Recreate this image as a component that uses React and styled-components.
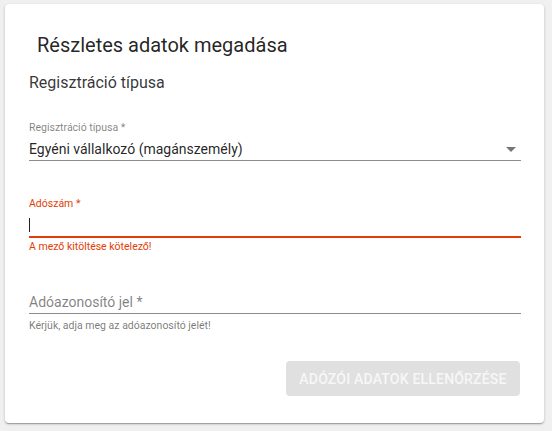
import styled, { createGlobalStyle } from 'styled-components';

const ERROR = '#e23d06';

const GlobalStyle = createGlobalStyle`
  html, body {
    margin: 0;
    padding: 0;
    background: #f0f0f0;
    font-family: Roboto, "Liberation Sans", sans-serif;
  }
`;

const Page = styled.div`
  padding: 4px 8px 8px 5px;
  width: 552px;
  height: 431px;
  box-sizing: border-box;
`;

const Card = styled.div`
  background: #fff;
  border-radius: 4px;
  box-shadow: 0 1px 3px rgba(0, 0, 0, 0.2), 0 1px 1px rgba(0, 0, 0, 0.14), 0 2px 1px -1px rgba(0, 0, 0, 0.12);
  height: 419px;
  box-sizing: border-box;
  padding: 25px 23px 0 24px;
  display: flex;
  flex-direction: column;
`;

const Title = styled.h2`
  margin: 0 0 0 8px;
  font-size: 20px;
  line-height: 32px;
  font-weight: 400;
  color: rgba(0, 0, 0, 0.87);
`;

const Section = styled.div`
  margin-top: 10px;
  font-size: 16px;
  line-height: 24px;
  color: rgba(0, 0, 0, 0.8);
`;

const Field = styled.div`
  margin-top: ${(p) => p.$top}px;
`;

const Label = styled.div`
  font-size: 10.5px;
  line-height: 14px;
  margin-bottom: 2px;
  color: ${(p) => (p.$error ? ERROR : 'rgba(0, 0, 0, 0.5)')};
`;

const InputRow = styled.div`
  display: flex;
  align-items: center;
  height: 24px;
  box-sizing: border-box;
  height: ${(p) => (p.$error ? 25 : 24)}px;
  border-bottom: ${(p) => (p.$error ? `2px solid ${ERROR}` : '1px solid rgba(0, 0, 0, 0.45)')};
  font-size: 14px;
  color: ${(p) => (p.$placeholder ? 'rgba(0, 0, 0, 0.5)' : 'rgba(0, 0, 0, 0.87)')};
`;

const Value = styled.span`
  flex: 1;
`;

const Caret = styled.span`
  width: 1px;
  height: 14px;
  background: #222;
`;

const Arrow = styled.svg`
  width: 24px;
  height: 24px;
  fill: rgba(0, 0, 0, 0.54);
  margin-right: -2px;
`;

const Helper = styled.div`
  margin-top: ${(p) => p.$gap}px;
  font-size: 10.5px;
  line-height: 14px;
  color: ${(p) => (p.$error ? ERROR : 'rgba(0, 0, 0, 0.55)')};
`;

const Actions = styled.div`
  display: flex;
  justify-content: flex-end;
  margin-top: 28px;
  padding-right: 1px;
`;

const Button = styled.button`
  width: 234px;
  height: 35px;
  border: 0;
  border-radius: 4px;
  background: #e0e0e0;
  color: #f7f7f7;
  font-family: Roboto, "Liberation Sans", sans-serif;
  font-size: 14px;
  font-weight: 500;
  text-transform: uppercase;
  letter-spacing: 0.2px;
  cursor: default;
`;

export default function App() {
  return (
    <>
      <GlobalStyle />
      <Page>
        <Card>
          <Title>Részletes adatok megadása</Title>
          <Section>Regisztráció típusa</Section>

          <Field $top={26}>
            <Label>Regisztráció típusa *</Label>
            <InputRow>
              <Value>Egyéni vállalkozó (magánszemély)</Value>
              <Arrow viewBox="0 0 24 24">
                <path d="M7 10l5 5 5-5z" />
              </Arrow>
            </InputRow>
          </Field>

          <Field $top={36}>
            <Label $error>Adószám *</Label>
            <InputRow $error>
              <Caret />
            </InputRow>
            <Helper $error $gap={2}>A mező kitöltése kötelező!</Helper>
          </Field>

          <Field $top={36}>
            <InputRow $placeholder>
              <Value>Adóazonosító jel *</Value>
            </InputRow>
            <Helper $gap={5}>Kérjük, adja meg az adóazonosító jelét!</Helper>
          </Field>

          <Actions>
            <Button disabled>Adózói adatok ellenőrzése</Button>
          </Actions>
        </Card>
      </Page>
    </>
  );
}
